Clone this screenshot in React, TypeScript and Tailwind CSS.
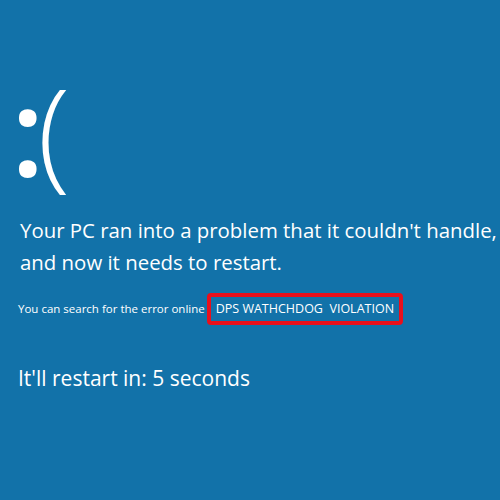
export default function App() {
  return (
    <div
      className="w-[500px] h-[500px] bg-[#1272a9] text-white overflow-hidden flex flex-col pl-[18px]"
      style={{ fontFamily: '"Open Sans", "Noto Sans", sans-serif' }}
    >
      <div className="mt-[64px] h-[148px] flex items-baseline leading-[130px]">
        <span className="text-[122px] font-semibold -ml-[7px] tracking-[-8px]">:</span>
        <span className="text-[120px] font-light ml-[1px]">(</span>
      </div>
      <div className="mt-[2px] pl-[2px] text-[20.4px] leading-[32px]">
        <div>Your PC ran into a problem that it couldn't handle,</div>
        <div>and now it needs to restart.</div>
      </div>
      <div className="mt-[15px] flex items-center text-[11.5px] leading-[16px]">
        <span>You can search for the error online</span>
        <span className="ml-[2px] h-[32px] flex items-center px-[5px] border-[4px] border-[#e8101c] rounded-[4px] whitespace-pre text-[12.5px]">
          DPS WATHCHDOG  VIOLATION
        </span>
      </div>
      <div className="mt-[38px] text-[21px] leading-[30px]">It'll restart in: 5 seconds</div>
    </div>
  );
}
